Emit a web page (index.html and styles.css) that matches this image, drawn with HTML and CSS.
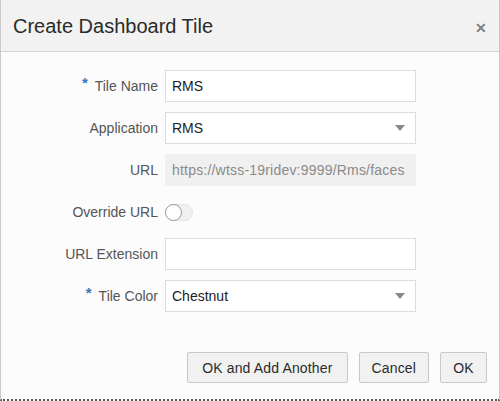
FILE: index.html
```html
<!DOCTYPE html>
<html lang="en">
  <head>
    <meta charset="UTF-8" />
    <title>Create Dashboard Tile</title>
    <link rel="stylesheet" href="styles.css">
  </head>
  <body>
    <div class="dialog">
      <div class="header">
        <h1>Create Dashboard Tile</h1>
        <span class="close">&#x2715;</span>
      </div>

      <div class="form">
        <label class="label"><span class="req">*</span>Tile Name</label>
        <div class="input">RMS</div>

        <label class="label">Application</label>
        <div class="input select">RMS<span class="arrow"></span></div>

        <label class="label">URL</label>
        <div class="input readonly">https://wtss-19ridev:9999/Rms/faces</div>

        <label class="label">Override URL</label>
        <div class="toggle-cell"><span class="toggle"><span class="knob"></span></span></div>

        <label class="label">URL Extension</label>
        <div class="input"></div>

        <label class="label"><span class="req">*</span>Tile Color</label>
        <div class="input select">Chestnut<span class="arrow"></span></div>
      </div>

      <div class="footer">
        <button class="btn wide">OK and Add Another</button>
        <button class="btn">Cancel</button>
        <button class="btn">OK</button>
      </div>
    </div>
  </body>
</html>
```

FILE: styles.css
```css
* {
  margin: 0;
  padding: 0;
  box-sizing: border-box;
}

body {
  font-family: 'Liberation Sans', Arial, sans-serif;
  background: #fcfcfc;
  color: #333;
}

.dialog {
  height: 401px;
  border-left: 1px solid #c9c9c9;
  border-right: 1px solid #c9c9c9;
  border-bottom: 2px dotted #555;
  background: #fcfcfc;
}

.header {
  height: 52px;
  background: #f2f2f2;
  border-bottom: 1px solid #d3d3d3;
  display: flex;
  align-items: center;
  justify-content: space-between;
  padding: 0 12px 0 12px;
}

.header h1 {
  font-size: 20px;
  font-weight: normal;
  color: #2b2b2b;
  padding-top: 2px;
}

.close {
  font-size: 14px;
  font-weight: bold;
  color: #808080;
  padding-top: 5px;
}

.form {
  display: grid;
  grid-template-columns: 157px 251px;
  grid-auto-rows: 32px;
  column-gap: 7px;
  row-gap: 10px;
  padding-top: 18px;
}

.label {
  font-size: 14px;
  color: #555;
  display: flex;
  align-items: center;
  justify-content: flex-end;
}

.req {
  color: #3a78c2;
  font-size: 15px;
  font-weight: bold;
  margin-right: 7px;
  position: relative;
  top: -4px;
}

.input {
  border: 1px solid #dcdcdc;
  background: #fff;
  font-size: 14px;
  color: #222;
  display: flex;
  align-items: center;
  padding: 0 6px;
  white-space: nowrap;
  overflow: hidden;
}

.select {
  justify-content: space-between;
}

.arrow {
  width: 0;
  height: 0;
  border-left: 5px solid transparent;
  border-right: 5px solid transparent;
  border-top: 6px solid #888;
  margin-right: 4px;
}

.readonly {
  background: #f0f0f0;
  border-color: #f0f0f0;
  color: #8a8a8a;
  letter-spacing: 0.2px;
}

.toggle-cell {
  display: flex;
  align-items: center;
}

.toggle {
  width: 28px;
  height: 17px;
  border-radius: 9px;
  background: #f0f0f0;
  border: 1px solid #e4e4e4;
  position: relative;
}

.knob {
  position: absolute;
  left: -1px;
  top: -1px;
  width: 17px;
  height: 17px;
  border-radius: 50%;
  background: #fff;
  border: 1px solid #9a9a9a;
}

.footer {
  display: flex;
  justify-content: flex-end;
  gap: 11px;
  padding: 40px 12px 0 0;
}

.btn {
  font-family: inherit;
  font-size: 14px;
  letter-spacing: 0.15px;
  color: #2b2b2b;
  background: #f1f1f1;
  border: 1px solid #c8c8c8;
  border-radius: 2px;
  height: 31px;
  min-width: 47px;
  padding: 0 12px;
}

.btn.wide {
  padding: 0 14px;
}
```
